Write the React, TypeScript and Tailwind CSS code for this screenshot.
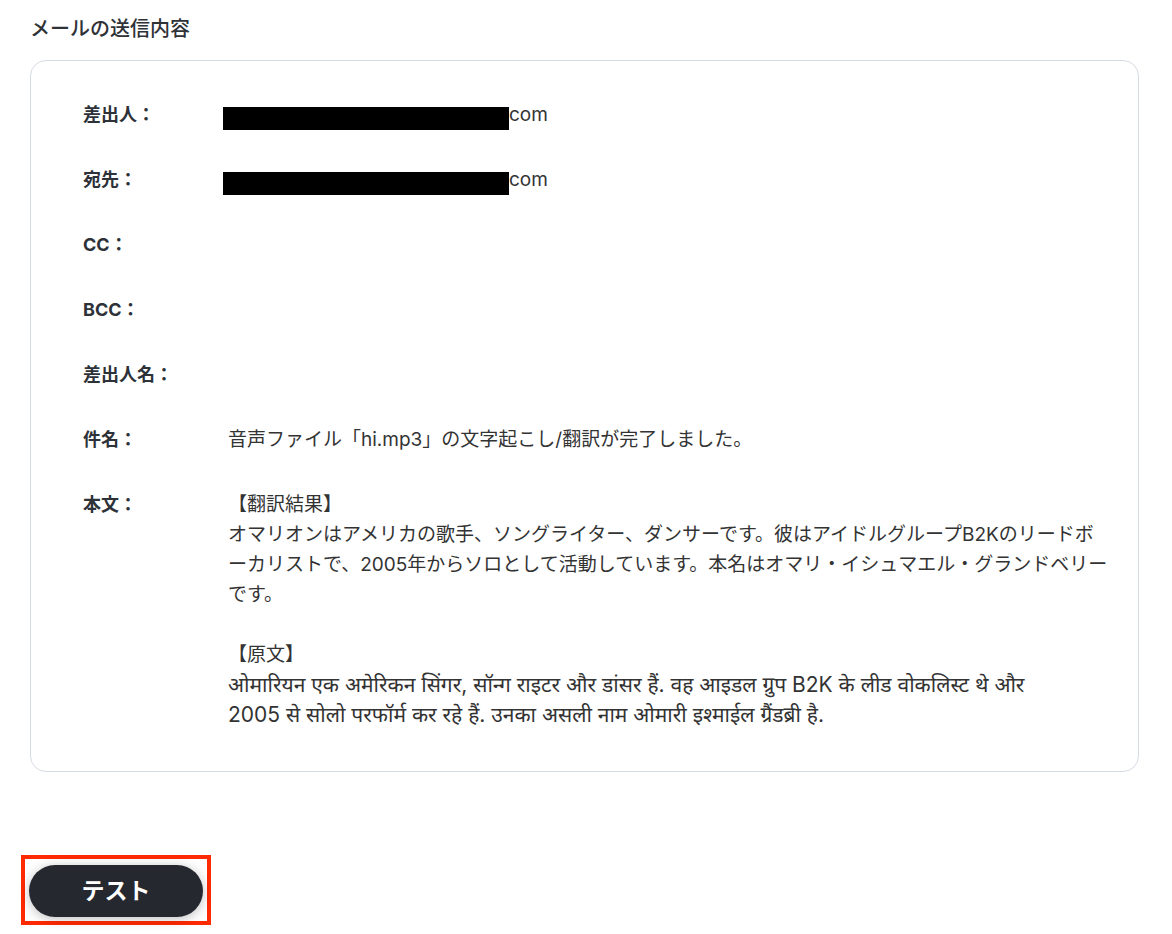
import React from "react";

const font = { fontFamily: '"Inter", "Noto Sans CJK JP", "Noto Sans", sans-serif' };

function Redacted() {
  return (
    <div className="flex h-[30px] items-center">
      <span className="block h-[23px] w-[286px] bg-black -ml-[5px] translate-y-[3px]" />
      <span>com</span>
    </div>
  );
}

function Row({ label, children }: { label: string; children?: React.ReactNode }) {
  return (
    <div className="flex min-h-[30px]">
      <div className="w-[145px] shrink-0 text-[18px] font-bold text-[#2d3138]">{label}</div>
      <div className="flex-1 text-[#333]">{children}</div>
    </div>
  );
}

export default function App() {
  return (
    <div className="min-h-[934px] w-[1172px] bg-white pl-[30px] pr-[33px] pt-[14px]" style={font}>
      <h2 className="text-[20px] font-medium leading-[30px] text-[#2f3237]">メールの送信内容</h2>
      <div className="mt-[16px] rounded-2xl border border-[#d6dce4] pl-[52px] pr-[40px] pt-[39px] pb-[41px] text-[19px] leading-[30px]">
        <div className="flex flex-col gap-[35px]">
          <Row label="差出人：">
            <Redacted />
          </Row>
          <Row label="宛先：">
            <Redacted />
          </Row>
          <Row label="CC：" />
          <Row label="BCC：" />
          <Row label="差出人名：" />
          <Row label="件名：">音声ファイル「hi.mp3」の文字起こし/翻訳が完了しました。</Row>
          <Row label="本文：">
            <div className="whitespace-nowrap">
              【翻訳結果】
              <br />
              オマリオンはアメリカの歌手、ソングライター、ダンサーです。彼はアイドルグループB2Kのリードボ
              <br />
              ーカリストで、2005年からソロとして活動しています。本名はオマリ・イシュマエル・グランドベリー
              <br />
              です。
              <br />
              <br />
              【原文】
              <div className="text-[21px] leading-[30px]">
                ओमारियन एक अमेरिकन सिंगर, सॉन्ग राइटर और डांसर हैं. वह आइडल ग्रुप B2K के लीड वोकलिस्ट थे और
                <br />
                2005 से सोलो परफॉर्म कर रहे हैं. उनका असली नाम ओमारी इश्माईल ग्रैंडब्री है.
              </div>
            </div>
          </Row>
        </div>
      </div>
      <div className="-ml-[9px] mt-[83px] inline-block border-4 border-[#ff2a00] pl-[4px] pr-[4px] pt-[6px] pb-[4px]">
        <button className="flex h-[52px] w-[174px] items-center justify-center rounded-full bg-[#25292f] text-[23px] font-bold text-white shadow-[0_2px_12px_rgba(0,0,0,0.25)]">
          テスト
        </button>
      </div>
    </div>
  );
}
